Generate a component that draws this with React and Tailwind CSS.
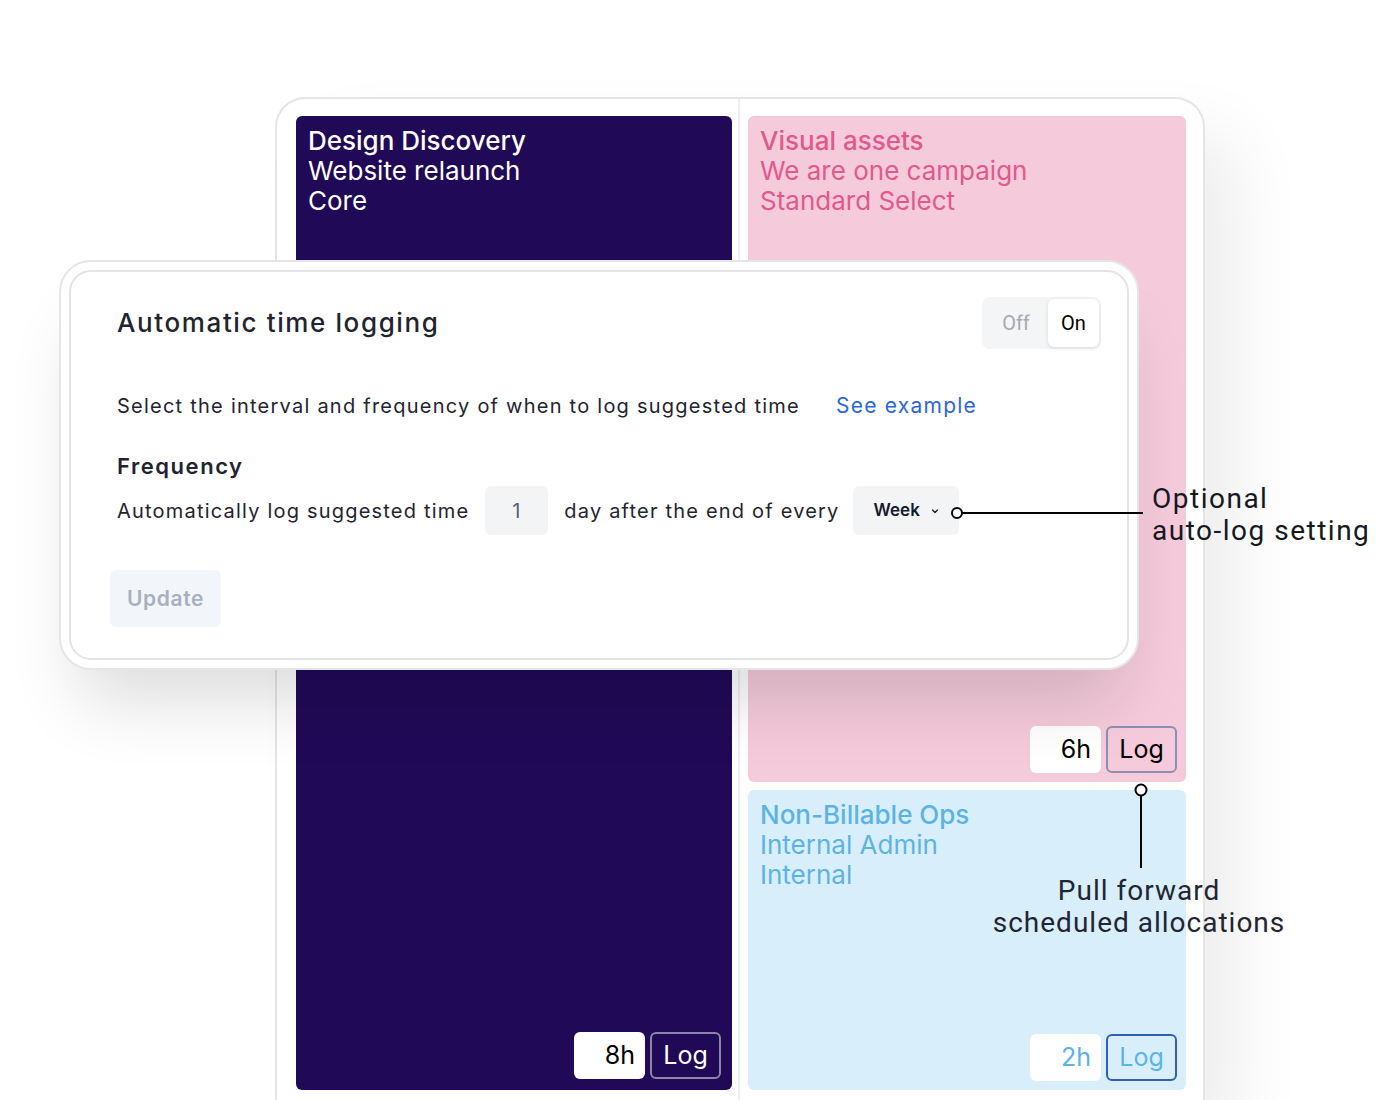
import React from "react";

function HourPair({ hours, hourText, logText, logBorder, logBg }) {
  return (
    <div className="flex gap-[5px]">
      <div className={`w-[71px] h-[47px] rounded-[6px] bg-white flex items-center justify-end pr-[10px] text-[25px] ${hourText}`}>
        {hours}
      </div>
      <div className={`w-[71px] h-[47px] rounded-[6px] border-2 flex items-center justify-center text-[25px] ${logBorder} ${logText} ${logBg}`}>
        Log
      </div>
    </div>
  );
}

export default function App() {
  return (
    <div className="relative w-[1400px] h-[1100px] overflow-hidden bg-white" style={{ fontFamily: "Inter, 'Noto Sans', sans-serif" }}>
      <div className="pl-[275px] pt-[97px]">
        <div className="w-[930px] h-[1030px] rounded-t-[30px] border-2 border-b-0 border-[#e4e5ea] bg-white flex shadow-[40px_30px_70px_-10px_rgba(0,0,0,0.08)]">
          {/* left column */}
          <div className="pl-[19px] pt-[17px] pr-[6px]">
            <div className="w-[436px] h-[974px] rounded-[6px] bg-[#200a57] flex flex-col justify-between p-[11px] pt-[10px]">
              <div className="text-white text-[26px] leading-[30px] pl-[1px]">
                <div className="font-medium">Design Discovery</div>
                <div>Website relaunch</div>
                <div>Core</div>
              </div>
              <div className="flex justify-end">
                <HourPair hours="8h" hourText="text-black" logText="text-white" logBorder="border-[#8b86a8]" logBg="bg-transparent" />
              </div>
            </div>
          </div>
          <div className="w-[2px] bg-[#eceef1]" />
          {/* right column */}
          <div className="pl-[8px] pt-[17px] flex flex-col gap-[8px]">
            <div className="w-[438px] h-[666px] rounded-[6px] bg-[#f5cadb] flex flex-col justify-between p-[9px] pl-[12px] pt-[10px]">
              <div className="text-[#e2598b] text-[26px] leading-[30px]">
                <div className="font-medium">Visual assets</div>
                <div>We are one campaign</div>
                <div>Standard Select</div>
              </div>
              <div className="flex justify-end">
                <HourPair hours="6h" hourText="text-black" logText="text-black" logBorder="border-[#8d8fb2]" logBg="bg-transparent" />
              </div>
            </div>
            <div className="w-[438px] h-[300px] rounded-[6px] bg-[#d8eefb] flex flex-col justify-between p-[9px] pl-[12px] pt-[10px]">
              <div className="text-[#5cb3e6] text-[26px] leading-[30px]">
                <div className="font-medium">Non-Billable Ops</div>
                <div>Internal Admin</div>
                <div>Internal</div>
              </div>
              <div className="flex justify-end">
                <HourPair hours="2h" hourText="text-[#5cb3e6]" logText="text-[#5cb3e6]" logBorder="border-[#2e5fb4]" logBg="bg-transparent" />
              </div>
            </div>
          </div>
        </div>
      </div>

      {/* modal overlay */}
      <div className="absolute left-[59px] top-[260px] w-[1080px] h-[410px] rounded-[32px] border-2 border-[#e4e6ea] bg-white p-[8px] shadow-[0_50px_70px_-20px_rgba(0,0,0,0.14)]">
        <div className="h-full rounded-[22px] border-2 border-[#e2e4e8] pl-[46px] pr-[26px] pt-[25px] text-[#1f2430]">
          <div className="flex items-center justify-between">
            <div className="text-[26px] font-medium leading-[32px] tracking-[0.062em]">Automatic time logging</div>
            <div className="flex items-center h-[52px] w-[119px] rounded-[8px] bg-[#f4f5f7] p-[2px]">
              <div className="w-[64px] text-center text-[20px] text-[#a5a9b3]" style={{ fontFamily: "Roboto, sans-serif" }}>Off</div>
              <div className="flex-1 h-full rounded-[6px] bg-white shadow-[0_1px_4px_rgba(0,0,0,0.12)] flex items-center justify-center text-[20px] text-black" style={{ fontFamily: "Roboto, sans-serif" }}>On</div>
            </div>
          </div>
          <div className="mt-[43px] flex items-center text-[20px] leading-[28px] tracking-[0.062em]">
            <span>Select the interval and frequency of when to log suggested time</span>
            <span className="ml-[36px] text-[21px] text-[#2d66d6]">See example</span>
          </div>
          <div className="mt-[32px] text-[22px] font-semibold leading-[28px] tracking-[0.07em]">Frequency</div>
          <div className="mt-[6px] flex items-center text-[20px] tracking-[0.06em]">
            <span>Automatically log suggested time</span>
            <div className="ml-[16px] w-[63px] h-[49px] rounded-[6px] bg-[#f3f4f6] flex items-center justify-center text-[#55607a]">1</div>
            <span className="ml-[16px]">day after the end of every</span>
            <div className="ml-[13px] w-[106px] h-[49px] rounded-[6px] bg-[#f3f4f6] flex items-center pl-[21px] gap-[10px] tracking-normal">
              <span className="text-[17px] font-semibold text-[#141a2e]">Week</span>
              <svg width="10" height="8" viewBox="0 0 10 8" fill="none">
                <path d="M2.5 3l2.5 2.5 2.5-2.5" stroke="#141a2e" strokeWidth="1.3" strokeLinecap="round" strokeLinejoin="round" />
              </svg>
            </div>
          </div>
          <div className="mt-[35px] -ml-[7px] w-[111px] h-[57px] rounded-[6px] bg-[#f2f6fb] flex items-center justify-center text-[21px] font-semibold text-[#a7b0c0] tracking-[0.03em]">
            Update
          </div>
        </div>
      </div>

      {/* connector to select */}
      <svg className="absolute left-[950px] top-[506px]" width="195" height="14" viewBox="0 0 195 14" fill="none">
        <circle cx="7" cy="7" r="5" stroke="#000" strokeWidth="2" fill="white" />
        <line x1="12" y1="7" x2="193" y2="7" stroke="#000" strokeWidth="2" />
      </svg>
      <div className="absolute left-[1152px] top-[483px] text-[28px] leading-[32px] text-[#151821] tracking-[1.5px]" style={{ fontFamily: "Roboto, sans-serif" }}>
        <div>Optional</div>
        <div>auto-log setting</div>
      </div>

      {/* connector to log */}
      <svg className="absolute left-[1133px] top-[782px]" width="16" height="88" viewBox="0 0 16 88" fill="none">
        <circle cx="8" cy="8" r="5.5" stroke="#000" strokeWidth="2" fill="white" />
        <line x1="8" y1="14" x2="8" y2="86" stroke="#000" strokeWidth="2" />
      </svg>
      <div className="absolute left-[959px] top-[875px] w-[360px] text-center text-[28px] leading-[32px] text-[#1f2533] tracking-[1px]" style={{ fontFamily: "Roboto, sans-serif" }}>
        <div>Pull forward</div>
        <div>scheduled allocations</div>
      </div>
    </div>
  );
}
